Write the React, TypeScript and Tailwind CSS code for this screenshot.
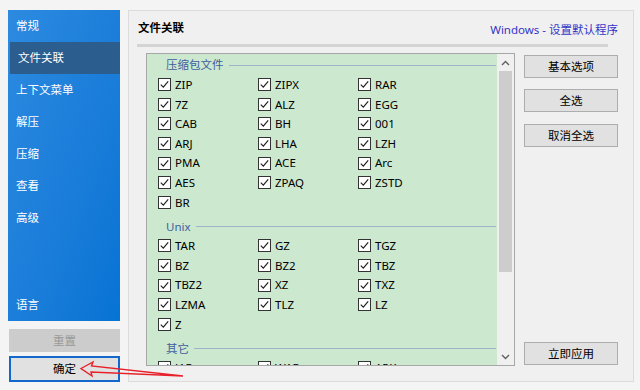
import React from 'react';

const navItems = ['常规', '文件关联', '上下文菜单', '解压', '压缩', '查看', '高级'];

const groups = [
  {
    title: '压缩包文件',
    items: ['ZIP', 'ZIPX', 'RAR', '7Z', 'ALZ', 'EGG', 'CAB', 'BH', '001', 'ARJ', 'LHA', 'LZH', 'PMA', 'ACE', 'Arc', 'AES', 'ZPAQ', 'ZSTD', 'BR'],
  },
  {
    title: 'Unix',
    items: ['TAR', 'GZ', 'TGZ', 'BZ', 'BZ2', 'TBZ', 'TBZ2', 'XZ', 'TXZ', 'LZMA', 'TLZ', 'LZ', 'Z'],
  },
  { title: '其它', items: ['JAR', 'WAR', 'APK'] },
];

function CheckBox() {
  return (
    <span className="w-[13px] h-[13px] border border-[#333333] bg-white flex items-center justify-center shrink-0">
      <svg width="11" height="11" viewBox="0 0 11 11">
        <polyline points="1.8,5.6 4.3,8.2 9.2,2.4" fill="none" stroke="#222" strokeWidth="1.2" />
      </svg>
    </span>
  );
}

function Button({ children, className = '' }: { children: React.ReactNode; className?: string }) {
  return (
    <div className={`h-[23px] w-[94px] bg-[#e1e1e1] border border-[#adadad] flex items-center justify-center text-[11.5px] text-black ${className}`}>
      {children}
    </div>
  );
}

export default function App() {
  return (
    <div className="relative w-[640px] h-[390px] bg-[#f4f4f4] flex font-['Noto_Sans','Noto_Sans_CJK_SC',sans-serif] overflow-hidden">
      {/* Left navigation */}
      <div className="w-[120px] pl-[8px] pt-[10px] flex flex-col">
        <div className="h-[311px] bg-gradient-to-br from-[#2c8ae0] to-[#0673d4] flex flex-col">
          {navItems.map((item) => (
            <div
              key={item}
              className={`h-[32px] flex items-center pl-[8px] text-[11.5px] text-white ${item === '文件关联' ? 'bg-[#2b5d8f] ml-[2px] pl-[6px]' : ''}`}
            >
              {item}
            </div>
          ))}
          <div className="flex-1" />
          <div className="h-[32px] flex items-center pl-[8px] text-[11.5px] text-white">语言</div>
        </div>
        <div className="mt-[8px] ml-[1px] h-[23px] bg-[#cccccc] flex items-center justify-center text-[11.5px] text-[#9a9a9a]">
          重置
        </div>
        <div className="mt-[4px] ml-[1px] h-[26px] bg-[#e1e1e1] border-2 border-[#1268cc] flex items-center justify-center text-[11.5px] text-black">
          确定
        </div>
      </div>

      {/* Right panel */}
      <div className="ml-[8px] mt-[10px] w-[506px] h-[372px] bg-[#f0f0f0] border border-[#dcdcdc] flex flex-col">
        <div className="h-[33px] flex items-center justify-between pl-[9px] pr-[15px]">
          <span className="text-[11.5px] font-bold text-black">文件关联</span>
          <span className="text-[11.5px] text-[#3434c8] mt-[4px]">Windows - 设置默认程序</span>
        </div>
        <div className="ml-[8px] w-[471px] h-[3px] bg-[#d4d4d4]" />

        <div className="flex mt-[6px]">
          {/* List box */}
          <div className="ml-[17px] w-[369px] h-[313px] border border-[#a7a7a7] bg-[#cce8cf] flex">
            <div className="flex-1 overflow-hidden pt-[1px]">
              {groups.map((g, gi) => (
                <div key={g.title} className={gi > 0 ? 'mt-[4px]' : ''}>
                  <div className="h-[20px] flex items-center pl-[19px] pr-[1px]">
                    <span className="text-[11.5px] text-[#3f5f9f]">{g.title}</span>
                    <span className="flex-1 ml-[5px] h-px bg-[#9fb3c9]" />
                  </div>
                  <div className="grid grid-cols-[100px_100px_100px] pl-[11px]">
                    {g.items.map((it) => (
                      <div key={it} className="h-[19.6px] flex items-center gap-[4px]">
                        <CheckBox />
                        <span className="text-[11.5px] text-black leading-none">{it}</span>
                      </div>
                    ))}
                  </div>
                </div>
              ))}
            </div>
            {/* Scrollbar */}
            <div className="w-[17px] bg-[#f0f0f0] flex flex-col">
              <div className="h-[17px] flex items-center justify-center">
                <svg width="9" height="6" viewBox="0 0 9 6">
                  <polyline points="1,5 4.5,1.5 8,5" fill="none" stroke="#606060" strokeWidth="1.4" />
                </svg>
              </div>
              <div className="mx-[2px] h-[201px] bg-[#cdcdcd]" />
              <div className="flex-1" />
              <div className="h-[17px] flex items-center justify-center">
                <svg width="9" height="6" viewBox="0 0 9 6">
                  <polyline points="1,1 4.5,4.5 8,1" fill="none" stroke="#606060" strokeWidth="1.4" />
                </svg>
              </div>
            </div>
          </div>

          {/* Buttons */}
          <div className="ml-[9px] flex flex-col">
            <Button className="mt-[2px]">基本选项</Button>
            <Button className="mt-[11px]">全选</Button>
            <Button className="mt-[12px]">取消全选</Button>
            <div className="flex-1" />
            <Button className="mb-[1px]">立即应用</Button>
          </div>
        </div>
      </div>

      {/* Red annotation arrow */}
      <svg className="absolute left-0 top-0 pointer-events-none" width="640" height="390">
        <polygon
          points="81,368.5 93,362 91.5,366 183,376 91,372 92,376"
          fill="none"
          stroke="#e8202a"
          strokeWidth="1.4"
          strokeLinejoin="miter"
        />
      </svg>
    </div>
  );
}
